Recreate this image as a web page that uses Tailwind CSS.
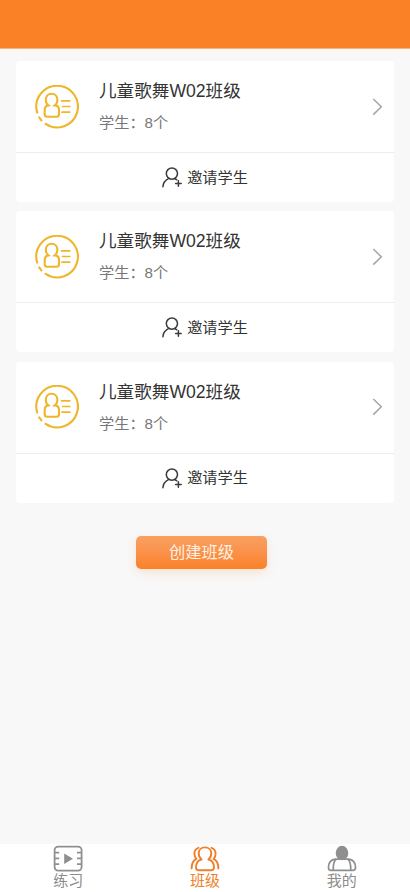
<!DOCTYPE html>
<html lang="zh-CN">
<head>
<meta charset="utf-8">
<meta name="viewport" content="width=device-width, initial-scale=1">
<title>班级</title>
<script src="https://cdn.jsdelivr.net/npm/@tailwindcss/browser@4"></script>
</head>
<body class="font-['Liberation_Sans','Noto_Sans_CJK_SC',sans-serif]">
<svg class="hidden">
  <symbol id="badge" viewBox="0 0 44 44"><g fill="none" stroke="#efb62c" stroke-width="2.1" stroke-linecap="round">
    <path d="M10.6 38.9A20.8 20.8 0 1 0 2.2 27.6M4.2 32.3L6.4 35.4"/>
    <path d="M13.4 20.4C11.6 19 10.8 17.4 10.8 15C10.8 11.4 13.2 8.8 16.6 8.8S22.4 11.4 22.4 15C22.4 17.4 21.6 19 19.8 20.4C23 20.6 24 22.4 24 25V29.3Q24 31.8 21.5 31.8H12.2Q9.7 31.8 9.7 29.3V25C9.7 22.4 10.5 20.8 13.4 20.4Z"/>
    <path stroke-width="1.7" d="M26.5 15.8H34.8M27.5 21.5H34.8M27 27.2H34.8"/></g></symbol>
  <symbol id="invite" viewBox="0 0 22 22"><g fill="none" stroke="#3a3a3a" stroke-width="1.5" stroke-linecap="round">
    <circle cx="9.9" cy="6.6" r="5.6"/><path d="M.9 19.8C1.1 15.8 3.3 13.2 6.8 11.4M12.8 11.5L14.8 12.8M16.4 13.7V19.3M13.6 16.5H19.2"/></g></symbol>
  <symbol id="chevron" viewBox="0 0 12 18"><path d="M1.3 1L9.3 8.8L1.3 16.6" fill="none" stroke="#a5a5a5" stroke-width="1.5"/></symbol>
</svg>
<div class="flex h-[892px] w-[410px] flex-col overflow-hidden bg-[#f8f8f8]">
  <header class="h-[49px] shrink-0 border-b border-[#fbb37a] bg-[#fa8125]"></header>
  <main class="flex flex-1 flex-col items-center px-4 pt-3">
    <div class="flex w-full flex-col gap-[9.4px]">
      <section class="h-[141px] rounded-[4px] bg-white">
        <div class="flex h-[92px] items-center border-b border-[#ededed] pr-2.5 pl-[19px]">
          <svg class="size-11"><use href="#badge"/></svg>
          <div class="ml-5 flex-1">
            <h2 class="text-[17.6px] leading-[26px] text-[#333]">儿童歌舞W02班级</h2>
            <p class="mt-[7px] text-[15.2px] leading-[24px] text-[#777]">学生：8个</p>
          </div>
          <svg class="h-[18px] w-3"><use href="#chevron"/></svg>
        </div>
        <div class="flex h-[49px] items-center justify-center gap-[3px] pt-px text-[15.2px] text-[#333]"><svg class="size-[22px]"><use href="#invite"/></svg>邀请学生</div>
      </section>
      <section class="h-[141px] rounded-[4px] bg-white">
        <div class="flex h-[92px] items-center border-b border-[#ededed] pr-2.5 pl-[19px]">
          <svg class="size-11"><use href="#badge"/></svg>
          <div class="ml-5 flex-1">
            <h2 class="text-[17.6px] leading-[26px] text-[#333]">儿童歌舞W02班级</h2>
            <p class="mt-[7px] text-[15.2px] leading-[24px] text-[#777]">学生：8个</p>
          </div>
          <svg class="h-[18px] w-3"><use href="#chevron"/></svg>
        </div>
        <div class="flex h-[49px] items-center justify-center gap-[3px] pt-px text-[15.2px] text-[#333]"><svg class="size-[22px]"><use href="#invite"/></svg>邀请学生</div>
      </section>
      <section class="h-[141px] rounded-[4px] bg-white">
        <div class="flex h-[92px] items-center border-b border-[#ededed] pr-2.5 pl-[19px]">
          <svg class="size-11"><use href="#badge"/></svg>
          <div class="ml-5 flex-1">
            <h2 class="text-[17.6px] leading-[26px] text-[#333]">儿童歌舞W02班级</h2>
            <p class="mt-[7px] text-[15.2px] leading-[24px] text-[#777]">学生：8个</p>
          </div>
          <svg class="h-[18px] w-3"><use href="#chevron"/></svg>
        </div>
        <div class="flex h-[49px] items-center justify-center gap-[3px] pt-px text-[15.2px] text-[#333]"><svg class="size-[22px]"><use href="#invite"/></svg>邀请学生</div>
      </section>
    </div>
    <button class="mt-[33px] mr-[7px] h-[33px] w-[131px] rounded-[5px] bg-linear-to-b from-[#f9a063] to-[#fb8127] text-[16.3px] leading-none text-[#fff0e2] shadow-[0_4px_10px_rgba(250,129,37,0.16)]">创建班级</button>
  </main>
  <nav class="grid h-12 shrink-0 grid-cols-3 bg-white text-[15px] leading-[18px] text-[#8c8c8c]">
    <a class="flex flex-col items-center pt-px">
      <svg class="h-[27px] w-8" viewBox="0 0 32 27" fill="none" stroke="#8f8f8f" stroke-width="1.8"><rect x="2.6" y="1.6" width="27" height="24" rx="3.5"/><path d="M3 7.7H7.2M3 13.4H7.2M3 19.1H7.2M25 7.7H29.2M25 13.4H29.2M25 19.1H29.2"/><path d="M12.2 8.4V19L21 13.7Z" fill="#8f8f8f" stroke="none"/></svg>
      <span>练习</span>
    </a>
    <a class="flex flex-col items-center pt-px text-[#f07f2b]">
      <svg class="h-[27px] w-8" viewBox="0 0 32 27" fill="none" stroke="#f07f2b" stroke-width="1.9" stroke-linecap="round" stroke-linejoin="round"><path d="M12.6 14.5C10.7 13.1 9.7 11.1 9.7 8.6C9.7 5 12.3 2.4 16 2.4S22.3 5 22.3 8.6C22.3 11.1 21.3 13.1 19.4 14.5C23.4 15.3 25 18 25 22.6Q25 25.2 22.5 25.2H9.5Q7 25.2 7 22.6C7 18 8.6 15.3 12.6 14.5Z"/><path d="M9.5 2.8C6.7 3.6 5.4 5.7 5.4 8.8C5.4 10.8 6 12.4 7.4 13.8C4 15.4 2.6 18.4 2.6 23.4M22.5 2.8C25.3 3.6 26.6 5.7 26.6 8.8C26.6 10.8 26 12.4 24.6 13.8C28 15.4 29.4 18.4 29.4 23.4"/></svg>
      <span>班级</span>
    </a>
    <a class="flex flex-col items-center pt-px">
      <svg class="h-[27px] w-8" viewBox="0 0 32 27" fill="none" stroke="#8f8f8f" stroke-width="1.7"><ellipse cx="16" cy="8" rx="6.3" ry="7.2" fill="#8f8f8f" stroke="none"/><path d="M9.5 14.2C4.4 14.6 2.5 17.5 2.5 22.8Q2.5 25.3 5 25.3H27Q29.5 25.3 29.5 22.8C29.5 17.5 27.6 14.6 22.5 14.2Z"/><path d="M10.2 14.3C7.8 15.6 7.2 18 7.2 25M21.8 14.3C24.2 15.6 24.8 18 24.8 25"/></svg>
      <span>我的</span>
    </a>
  </nav>
</div>
</body>
</html>
